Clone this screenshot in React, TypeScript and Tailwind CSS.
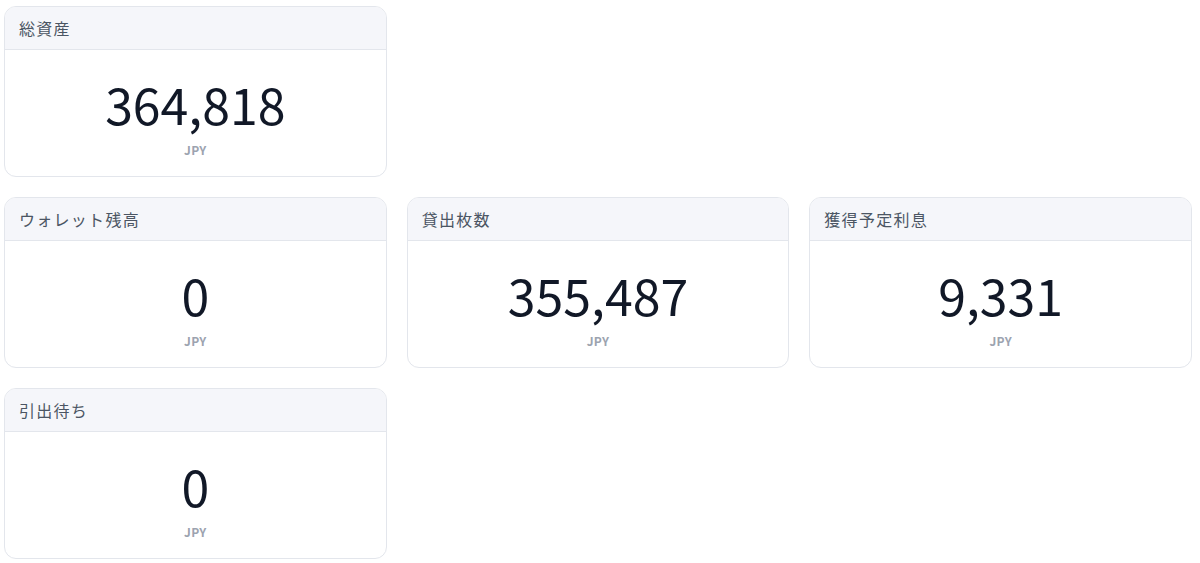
interface StatItem {
    label: string;
    value: string;
    unit: string;
}

const rows: StatItem[][] = [
    [{ label: "総資産", value: "364,818", unit: "JPY" }],
    [
        { label: "ウォレット残高", value: "0", unit: "JPY" },
        { label: "貸出枚数", value: "355,487", unit: "JPY" },
        { label: "獲得予定利息", value: "9,331", unit: "JPY" },
    ],
    [{ label: "引出待ち", value: "0", unit: "JPY" }],
];

const StatCard = ({ item }: { item: StatItem }) => (
    <div className="overflow-hidden rounded-xl border border-[#e3e6ec] bg-white">
        <div className="border-b border-[#e3e6ec] bg-[#f5f6fa] px-[14px] py-[11px] text-base leading-5 tracking-[0.08em] text-[#4b5563]">
            {item.label}
        </div>
        <div className="flex flex-col items-center pt-[28px] pb-[18px]">
            <div className="text-[50px] leading-none text-[#111827]">{item.value}</div>
            <div className="mt-[14px] text-xs font-semibold leading-4 tracking-wide text-[#9ca3af]">
                {item.unit}
            </div>
        </div>
    </div>
);

export default function App() {
    return (
        <div
            className="flex flex-col gap-5 pt-[6px] pl-[4px] pr-[8px] bg-white"
            style={{ fontFamily: '"Noto Sans CJK JP", "Noto Sans", sans-serif' }}
        >
            {rows.map((row, i) => (
                <div key={i} className="grid grid-cols-3 gap-5">
                    {row.map((item) => (
                        <StatCard key={item.label} item={item} />
                    ))}
                </div>
            ))}
        </div>
    );
}
